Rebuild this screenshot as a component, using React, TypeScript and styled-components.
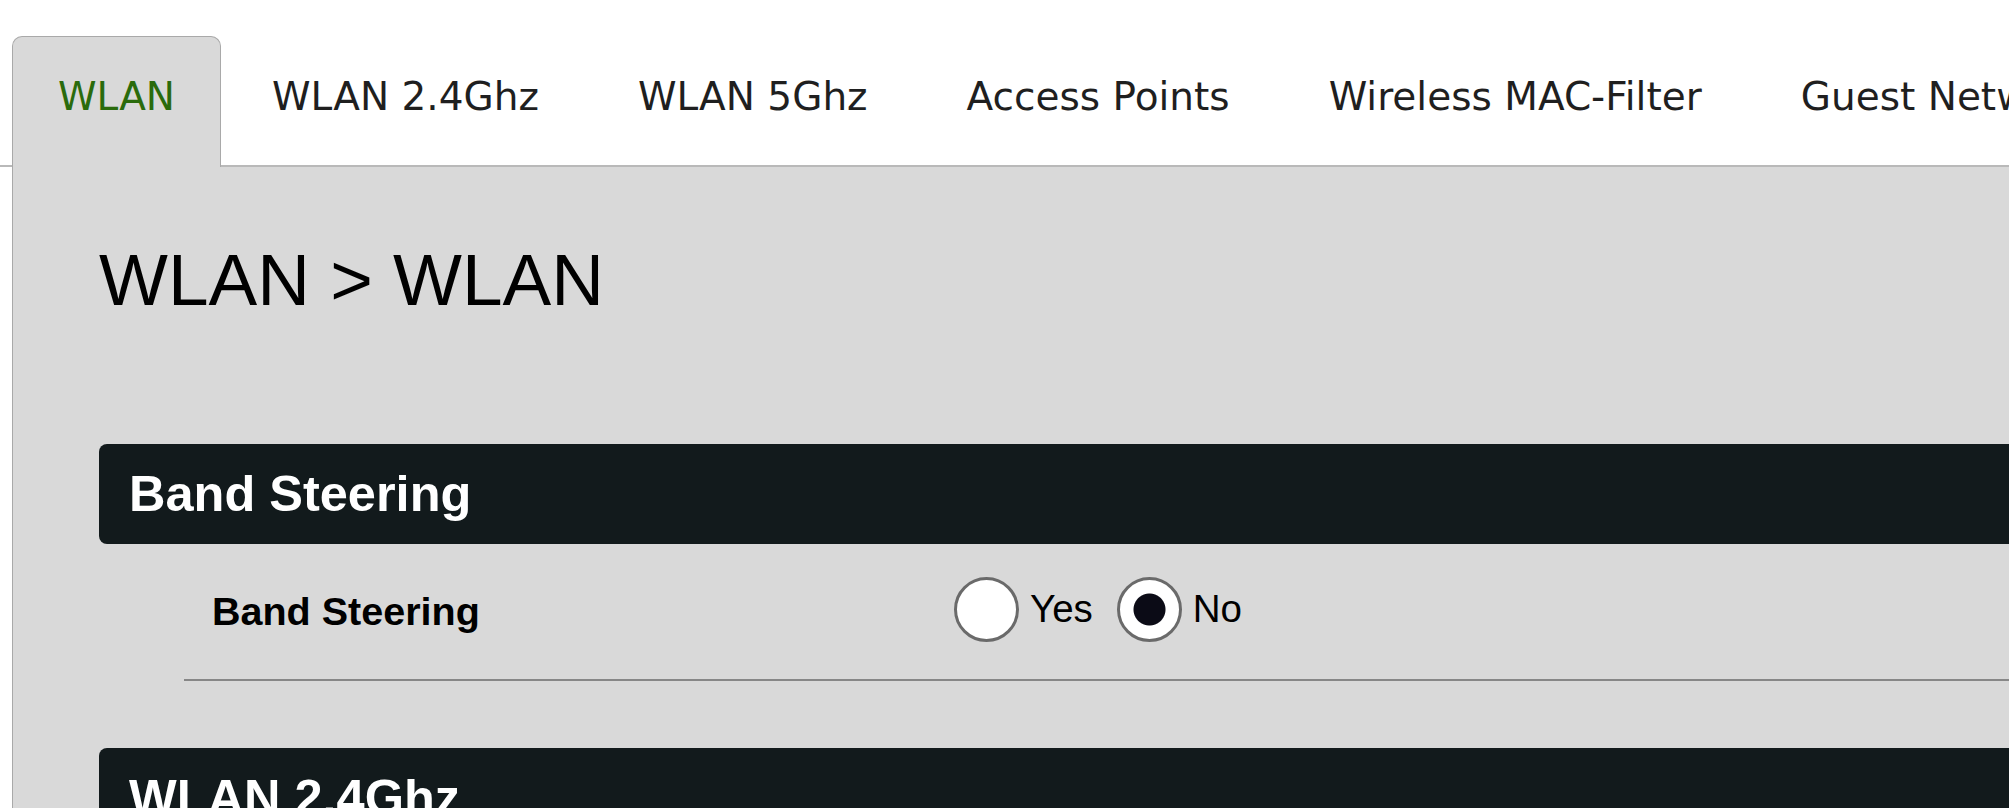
import React from "react";
import styled, { createGlobalStyle } from "styled-components";

const GlobalStyle = createGlobalStyle`
  html, body {
    margin: 0;
    padding: 0;
    background: #ffffff;
    overflow: hidden;
  }
  body {
    font-family: "Liberation Sans", Arial, sans-serif;
    color: #000;
  }
`;

const Page = styled.div`
  width: 2600px;
  min-height: 808px;
`;

const TabBar = styled.nav`
  display: flex;
  align-items: flex-end;
  padding: 36px 0 0 12px;
  box-shadow: inset 0 -2px 0 #b9b9b9;
`;

const Tab = styled.div<{ $active?: boolean }>`
  flex: none;
  padding: 37px ${(p) => (p.$active ? "45px" : "47px")} 47px;
  margin-right: 3px;
  font-family: "DejaVu Sans", Verdana, sans-serif;
  font-size: 39px;
  line-height: 46px;
  white-space: nowrap;
  color: ${(p) => (p.$active ? "#2a6b0c" : "#1f1f1f")};
  background: ${(p) => (p.$active ? "#d9d9d9" : "transparent")};
  border: 1px solid ${(p) => (p.$active ? "#a9a9a9" : "transparent")};
  border-bottom: none;
  border-radius: 10px 10px 0 0;
`;

const Panel = styled.main`
  background: #d9d9d9;
  border-left: 1px solid #a9a9a9;
  margin-left: 12px;
  padding: 71px 0 0 86px;
  min-height: 700px;
`;

const Heading = styled.h1`
  margin: 0 0 122px;
  font-family: "Liberation Sans", Arial, sans-serif;
  font-weight: 400;
  font-size: 73px;
  line-height: 84px;
  color: #000;
`;

const Section = styled.section<{ $first?: boolean }>`
  margin-top: ${(p) => (p.$first ? "0" : "67px")};
`;

const SectionBar = styled.h2`
  margin: 0;
  height: 100px;
  padding-left: 30px;
  border-radius: 8px;
  background: #121a1c;
  color: #ffffff;
  font-family: "Liberation Sans", Arial, sans-serif;
  font-weight: 700;
  font-size: 50.5px;
  line-height: 100px;
`;

const Row = styled.div`
  box-sizing: border-box;
  margin-left: 85px;
  height: 137px;
  padding: 0 0 5px 28px;
  display: grid;
  grid-template-columns: 742px auto;
  align-items: center;
  border-bottom: 2px solid #878787;
`;

const FieldLabel = styled.div`
  padding-top: 5px;
  font-weight: 700;
  font-size: 39.5px;
  color: #000;
`;

const RadioGroup = styled.div`
  display: flex;
  align-items: center;
`;

const Option = styled.label`
  display: flex;
  align-items: center;
  gap: 11px;
  margin-right: 24px;
  font-size: 38.5px;
  color: #000;
`;

const Radio = styled.input`
  appearance: none;
  -webkit-appearance: none;
  box-sizing: border-box;
  margin: 0;
  width: 65px;
  height: 65px;
  border-radius: 50%;
  border: 3px solid #6a6a6a;
  background: #ffffff;

  &:checked {
    background: radial-gradient(circle at center, #0b0b16 0 15.5px, #ffffff 16.5px);
  }
`;

const tabs = [
  "WLAN",
  "WLAN 2.4Ghz",
  "WLAN 5Ghz",
  "Access Points",
  "Wireless MAC-Filter",
  "Guest Network",
];

export default function App() {
  return (
    <Page>
      <GlobalStyle />
      <TabBar>
        {tabs.map((t, i) => (
          <Tab key={t} $active={i === 0}>
            {t}
          </Tab>
        ))}
      </TabBar>
      <Panel>
        <Heading>WLAN &gt; WLAN</Heading>
        <Section $first>
          <SectionBar>Band Steering</SectionBar>
          <Row>
            <FieldLabel>Band Steering</FieldLabel>
            <RadioGroup>
              <Option>
                <Radio type="radio" name="bandsteering" value="yes" />
                Yes
              </Option>
              <Option>
                <Radio type="radio" name="bandsteering" value="no" defaultChecked />
                No
              </Option>
            </RadioGroup>
          </Row>
        </Section>
        <Section>
          <SectionBar>WLAN 2.4Ghz</SectionBar>
        </Section>
      </Panel>
    </Page>
  );
}
